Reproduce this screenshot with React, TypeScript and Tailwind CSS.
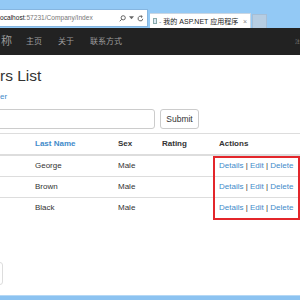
import React from "react";

const font = { fontFamily: '"Liberation Sans", Arial, "Noto Sans CJK SC", sans-serif' };

function Row({ last }: { last: string }) {
  return (
    <div className="grid grid-cols-[35px_83px_44px_57px_1fr] h-[21px] border-t border-[#dddddd] items-center text-[8px] text-[#333333]">
      <div />
      <div>{last}</div>
      <div>Male</div>
      <div />
      <div className="whitespace-nowrap">
        <span className="text-[#428bca]">Details</span> | <span className="text-[#428bca]">Edit</span> |{" "}
        <span className="text-[#428bca]">Delete</span>
      </div>
    </div>
  );
}

export default function App() {
  return (
    <div className="w-[300px] h-[300px] overflow-hidden bg-white flex flex-col" style={font}>
      {/* browser chrome */}
      <div className="h-[28px] shrink-0 bg-[#93c9f5] flex items-end">
        <div className="w-[148px] h-[18px] mb-[1px] bg-white border border-l-0 border-[#86b6e0] flex items-center text-[6.6px] leading-none">
          <span className="text-[#222]">ocalhost</span>
          <span className="text-[#777]">:57231/Company/Index</span>
          <div className="ml-auto flex items-center gap-[3px] pr-[3px] text-[#555]">
            <svg width="7" height="7" viewBox="0 0 10 10" fill="none" stroke="#555" strokeWidth="1.3">
              <circle cx="6" cy="4" r="3" />
              <path d="M3.8 6.2 L1 9" />
            </svg>
            <svg width="5" height="4" viewBox="0 0 6 4">
              <path d="M0 0 L6 0 L3 3.5 Z" fill="#666" />
            </svg>
            <svg width="7" height="7" viewBox="0 0 10 10" fill="none" stroke="#555" strokeWidth="1.3">
              <path d="M8.3 5.5 A3.4 3.4 0 1 1 6.8 2.2" />
              <path d="M5.6 0.8 L7.6 2.2 L5.8 3.8" />
            </svg>
          </div>
        </div>
        <div className="ml-[2px] w-[101px] h-[15px] bg-white border-t border-r border-[#c9d6e3] flex items-center text-[7px] text-[#222] leading-none">
          <div className="ml-[3px] w-[4px] h-[6px] border border-[#8aa] bg-[#dde8f4]" />
          <span className="ml-[2px] text-[#888]">-</span>
          <span className="ml-[2px]">我的 ASP.NET 应用程序</span>
          <span className="ml-auto mr-[3px] text-[#888] text-[7px]">×</span>
        </div>
        <div className="ml-[1px] w-[15px] h-[14px] bg-[#b6cde2] border border-b-0 border-[#a5bed6]" />
      </div>

      {/* navbar */}
      <div className="h-[27px] shrink-0 bg-[#222222] flex items-center text-[#9d9d9d] text-[8px] leading-none whitespace-nowrap">
        <span className="ml-[1px] text-[11px] text-[#9d9d9d]">称</span>
        <span className="ml-[14px]">主页</span>
        <span className="ml-[16px]">关于</span>
        <span className="ml-[16px]">联系方式</span>
        <span className="ml-auto mr-0 text-[5px] text-[#888]">注</span>
      </div>

      {/* content */}
      <div className="flex flex-col">
        <div className="mt-[12px] text-[15.5px] leading-[18px] text-[#333]">rs List</div>
        <div className="mt-[6px] text-[8px] leading-[12px] text-[#428bca]">er</div>
        <div className="mt-[6px] flex items-center h-[20px]">
          <div className="-ml-[3px] w-[158px] h-[20px] rounded-[3px] border border-[#cccccc] bg-white" />
          <div className="ml-[5px] w-[39px] h-[20px] rounded-[3px] border border-[#cccccc] bg-white flex items-center justify-center text-[8.5px] text-[#333]">
            Submit
          </div>
        </div>

        <div className="relative mt-[4px]">
          <div className="grid grid-cols-[35px_83px_44px_57px_1fr] h-[23px] border-t border-b-2 border-[#dddddd] items-center text-[8px] font-bold text-[#333]">
            <div />
            <div className="text-[#428bca]">Last Name</div>
            <div>Sex</div>
            <div>Rating</div>
            <div>Actions</div>
          </div>
          <div className="grid grid-cols-[35px_83px_44px_57px_1fr] h-[20px] items-center text-[8px] text-[#333333]">
            <div />
            <div>George</div>
            <div>Male</div>
            <div />
            <div className="whitespace-nowrap">
              <span className="text-[#428bca]">Details</span> | <span className="text-[#428bca]">Edit</span> |{" "}
              <span className="text-[#428bca]">Delete</span>
            </div>
          </div>
          <Row last="Brown" />
          <Row last="Black" />
          <div className="absolute left-[213px] top-[23px] w-[87px] h-[64px] border-2 border-[#e3262b]" />
        </div>

        <div className="mt-[44px] -ml-[4px] w-[7px] h-[23px] rounded-[3px] border border-[#dddddd]" />
      </div>

      <div className="mt-auto h-[5px] shrink-0 bg-[#8cc3f1] border-t border-[#b5d8f5]" />
    </div>
  );
}
